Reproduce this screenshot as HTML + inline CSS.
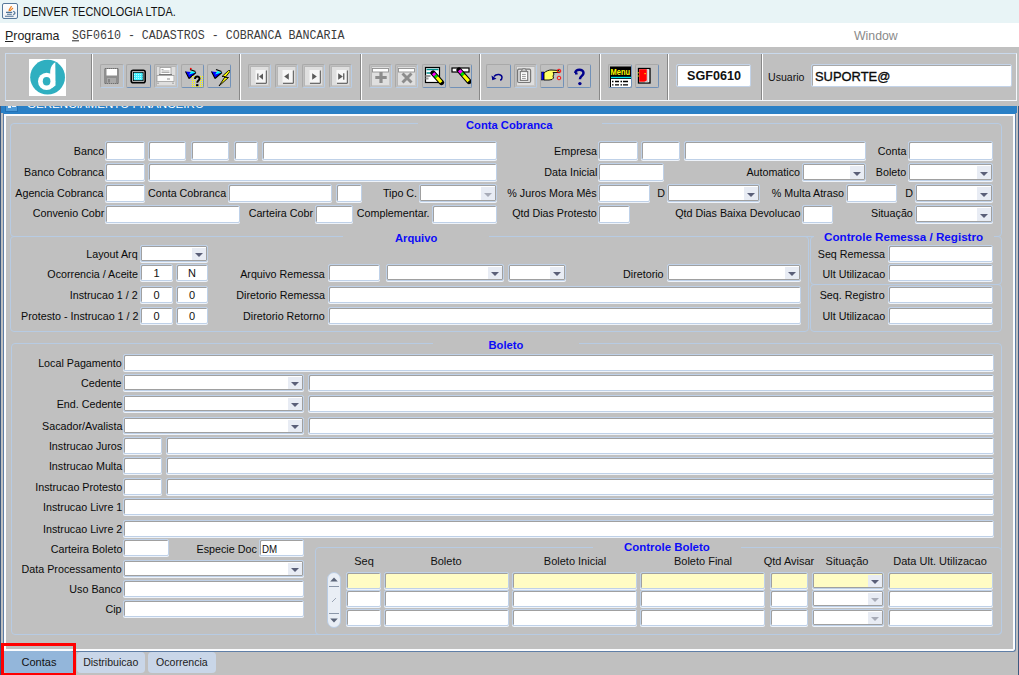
<!DOCTYPE html><html><head><meta charset="utf-8"><style>
*{margin:0;padding:0;box-sizing:border-box}
html,body{width:1019px;height:675px;overflow:hidden;background:#c0c0c0;font-family:"Liberation Sans",sans-serif;position:relative}
div{position:absolute}
.lb{white-space:nowrap;color:#0a0a0a;text-align:right;transform:scaleX(0.975);transform-origin:100% 50%}
.lc{white-space:nowrap;color:#111;text-align:center;width:200px}
.f{border:1px solid #bfd1e8;border-radius:2px;box-shadow:inset 1px 1px 0 #a0a0a0, 0 1px 0 #eef3fa;font-size:11px;color:#111;overflow:hidden;padding:0 3px}
.cb{box-shadow:inset 0 0 0 1px #a0a0a0, 0 1px 0 #eef3fa}.cb i{position:absolute;right:1px;top:2px;bottom:1px;width:14px;background:#e8ecf4}
.cb i:after{content:"";position:absolute;left:3px;top:50%;margin-top:-1px;border-left:4px solid transparent;border-right:4px solid transparent;border-top:4px solid #5a5f78}
.cb.dis i:after{border-top-color:#a8acb8}
.fr{border:1px solid #b7cbe3;border-radius:4px}
.ft{color:#0c0cf8;font-weight:bold;white-space:nowrap;height:14px;line-height:14px}
.tb{border:1px solid #a9a9a9;border-radius:2px;overflow:hidden}
.sep{width:2px;background:linear-gradient(90deg,#888 0 1px,#fff 1px 2px)}
</style></head><body>

<div style="left:0;top:0;width:1019px;height:23px;background:#e8f4f6"></div>
<div style="left:2px;top:3px;width:16px;height:16px;border:1px solid #56789b;border-radius:2px;background:linear-gradient(#fdfdfd,#eef1f4)"><svg width="14" height="14" viewBox="0 0 14 14" style="position:absolute;left:0;top:0"><path d="M6.2 7.2c-.8-2 1.8-3 2.2-5.2M7.2 7c.5-1.5 2.2-1.8 2.6-3.2" stroke="#f07c16" stroke-width="1.2" fill="none"/><path d="M3 8.4h6.2M4 10.3h4.8M2 12.3h8.6" stroke="#4d7295" stroke-width="1.1"/><path d="M10.2 7.2c2.4.8 2.4 2.6 0 3.4" stroke="#4d7295" stroke-width="1.2" fill="none"/></svg></div>
<div style="left:23px;top:4px;height:17px;line-height:17px;font-size:12.5px;color:#111;white-space:nowrap;transform:scaleX(0.875);transform-origin:0 50%">DENVER TECNOLOGIA LTDA.</div>
<div style="left:0;top:23px;width:1019px;height:24px;background:#fff"></div>
<div style="left:5px;top:28px;height:16px;line-height:16px;font-size:12.4px;color:#222;white-space:nowrap"><u>P</u>rograma</div>
<div style="left:72px;top:27.5px;height:16px;line-height:16px;font-size:11.65px;font-family:'Liberation Mono',monospace;color:#3c3c3c;white-space:nowrap;transform:scaleY(1.1);transform-origin:0 60%"><u>S</u>GF0610 - CADASTROS - COBRANCA BANCARIA</div>
<div style="left:854px;top:28px;height:16px;line-height:16px;font-size:12.3px;color:#8a8a8a;white-space:nowrap">Window</div>
<div style="left:5px;top:53px;width:1012px;height:48px;border:1px solid #f4f8fc;border-top-color:#c9d9ec;border-left-color:#c9d9ec;box-shadow:inset 0 0 0 0 #000"></div>
<div class="sep" style="left:91px;top:54px;height:46px"></div>
<div class="sep" style="left:239px;top:54px;height:46px"></div>
<div class="sep" style="left:360px;top:54px;height:46px"></div>
<div class="sep" style="left:479px;top:54px;height:46px"></div>
<div class="sep" style="left:599px;top:54px;height:46px"></div>
<div class="sep" style="left:667px;top:54px;height:46px"></div>
<div class="sep" style="left:761px;top:54px;height:46px"></div>
<div style="left:29px;top:59px;width:37px;height:37px;background:#fff"><svg width="37" height="37" viewBox="0 0 37 37" style="position:absolute;left:0;top:0"><circle cx="18.6" cy="18.2" r="17.4" fill="#2fafc0"/><circle cx="17.6" cy="22.3" r="8.6" fill="#fff"/><path d="M21.3 11 C22 7 24 4.5 26.3 3.2 L26.5 26.5 L23.8 28.6 L20.5 28 Z" fill="#fff"/><ellipse cx="17.6" cy="22.3" rx="3.8" ry="4.2" fill="#2fafc0"/></svg></div>
<div class="tb" style="left:100px;top:64px;width:24px;height:24px;background:#c0c0c0;border-right-color:#b8cde6;border-bottom-color:#b8cde6"><svg width="24" height="24" viewBox="0 0 24 24" style="position:absolute;left:-1px;top:-1px;overflow:hidden"><rect x="4" y="4" width="15" height="16" rx="1.5" fill="#8e8e8e"/><rect x="6.5" y="5" width="10.5" height="6.5" fill="#fff"/><rect x="7" y="14" width="9" height="5.5" fill="#a9a9a9"/><rect x="8" y="15" width="2" height="3.5" fill="#858585"/><path d="M5 4.5h13M5 19.5h13" stroke="#6f6f6f" stroke-dasharray="1 1"/></svg></div>
<div class="tb" style="left:126px;top:64px;width:25px;height:24px;background:#c0c0c0;border-right-color:#7191b8;border-bottom-color:#7191b8"><svg width="24" height="24" viewBox="0 0 24 24" style="position:absolute;left:-1px;top:-1px;overflow:hidden"><rect x="5.2" y="6.3" width="14" height="12.4" rx="2" fill="#c0c0c0" stroke="#000" stroke-width="1.6"/><rect x="7.3" y="8.3" width="9.8" height="8.4" fill="#40f0ff" stroke="#000" stroke-width="0.8"/><path d="M8 10.5h8.4M8 12.5h8.4M8 14.5h8.4" stroke="#d8ffff" stroke-width="0.8" stroke-dasharray="1 1"/></svg></div>
<div class="tb" style="left:154px;top:64px;width:24px;height:24px;background:#c0c0c0;border-right-color:#b8cde6;border-bottom-color:#b8cde6"><div style="left:1px;top:1px;right:1px;bottom:1px;background:#dfdfdf;box-shadow:inset 1px 1px 0 #b6b6b6,inset -1px -1px 0 #c8c8c8"></div><svg width="24" height="24" viewBox="0 0 24 24" style="position:absolute;left:-1px;top:-1px;overflow:hidden"><rect x="6" y="3.5" width="11" height="7" fill="#fff" stroke="#9a9a9a" stroke-width="0.8"/><path d="M7.5 5.5h2M7.5 7h8M7.5 8.5h8" stroke="#8a8a8a" stroke-width="0.7"/><path d="M5 10.5h13" stroke="#777" stroke-width="1"/><rect x="3" y="11.5" width="17" height="6" fill="#fafafa" stroke="#9c9c9c" stroke-width="0.8"/><path d="M4 18.5v1.5M19 18.5v1.5M13 15h3" stroke="#8a8a8a" stroke-width="1"/></svg></div>
<div class="tb" style="left:181px;top:64px;width:23px;height:24px;background:#c0c0c0;border-right-color:#7191b8;border-bottom-color:#7191b8"><svg width="24" height="24" viewBox="0 0 24 24" style="position:absolute;left:-1px;top:-1px;overflow:hidden"><path d="M4.5 7.5l3.5 7 7-6z" fill="#0000ff"/><path d="M8 10.5l7-2-4.5-1.5z" fill="#00ffff"/><path d="M4.5 7.5l3.5 7M8 14.5l7-6" stroke="#000" stroke-width="1.1" fill="none"/><path d="M9 5.5l5.5 2" stroke="#000" stroke-width="1.3"/><circle cx="9.8" cy="4.6" r="0.9" fill="#f00"/><g fill="#ffff00"><rect x="11" y="12" width="1" height="1"/><rect x="11" y="14" width="1" height="1"/><rect x="11" y="16" width="1" height="1"/><rect x="11" y="18" width="1" height="1"/><rect x="11" y="20" width="1" height="1"/><rect x="11" y="22" width="1" height="1"/><rect x="13" y="12" width="1" height="1"/><rect x="13" y="14" width="1" height="1"/><rect x="13" y="16" width="1" height="1"/><rect x="13" y="18" width="1" height="1"/><rect x="13" y="20" width="1" height="1"/><rect x="13" y="22" width="1" height="1"/><rect x="15" y="12" width="1" height="1"/><rect x="15" y="22" width="1" height="1"/><rect x="17" y="12" width="1" height="1"/><rect x="17" y="22" width="1" height="1"/><rect x="19" y="12" width="1" height="1"/><rect x="19" y="14" width="1" height="1"/><rect x="19" y="16" width="1" height="1"/><rect x="19" y="18" width="1" height="1"/><rect x="19" y="20" width="1" height="1"/><rect x="19" y="22" width="1" height="1"/><rect x="21" y="12" width="1" height="1"/><rect x="21" y="14" width="1" height="1"/><rect x="21" y="16" width="1" height="1"/><rect x="21" y="18" width="1" height="1"/><rect x="21" y="20" width="1" height="1"/><rect x="21" y="22" width="1" height="1"/></g><path d="M14 15c0-3.2 4.5-3.2 4.5-.3 0 1.8-2.3 1.8-2.3 4" fill="none" stroke="#000" stroke-width="1.9"/><rect x="15.1" y="20.2" width="2.3" height="2" fill="#000"/></svg></div>
<div class="tb" style="left:207px;top:64px;width:24px;height:24px;background:#c0c0c0;border-right-color:#7191b8;border-bottom-color:#7191b8"><svg width="24" height="24" viewBox="0 0 24 24" style="position:absolute;left:-1px;top:-1px;overflow:hidden"><path d="M4.5 7.5l3.5 7 7-6z" fill="#0000ff"/><path d="M8 10.5l7-2-4.5-1.5z" fill="#00ffff"/><path d="M4.5 7.5l3.5 7M8 14.5l7-6" stroke="#000" stroke-width="1.1" fill="none"/><path d="M9 5.5l5.5 2" stroke="#000" stroke-width="1.3"/><path d="M21.5 6.5l-6.5 6h3.2l-6.2 9.5 9.5-8.5h-3.3l5.5-7z" fill="#ffff00" stroke="#000" stroke-width="0.9" stroke-linejoin="round"/></svg></div>
<div class="tb" style="left:248px;top:64px;width:23px;height:24px;background:#c0c0c0;border-right-color:#b8cde6;border-bottom-color:#b8cde6"><div style="left:1px;top:1px;right:1px;bottom:1px;background:#dfdfdf;box-shadow:inset 1px 1px 0 #b6b6b6,inset -1px -1px 0 #c8c8c8"></div><svg width="24" height="24" viewBox="0 0 24 24" style="position:absolute;left:-1px;top:-1px;overflow:hidden"><rect x="7.5" y="6" width="10.5" height="12.5" fill="#f7f7f7"/><path d="M18.3 6.5v12.8H8" fill="none" stroke="#505050" stroke-width="1"/><rect x="9.3" y="9.5" width="1.1" height="6.2" fill="#5a5a5a"/><path d="M15 9.5l-4 3.1 4 3.1z" fill="#5a5a5a"/></svg></div>
<div class="tb" style="left:275px;top:64px;width:23px;height:24px;background:#c0c0c0;border-right-color:#b8cde6;border-bottom-color:#b8cde6"><div style="left:1px;top:1px;right:1px;bottom:1px;background:#dfdfdf;box-shadow:inset 1px 1px 0 #b6b6b6,inset -1px -1px 0 #c8c8c8"></div><svg width="24" height="24" viewBox="0 0 24 24" style="position:absolute;left:-1px;top:-1px;overflow:hidden"><rect x="7.5" y="6" width="10.5" height="12.5" fill="#f7f7f7"/><path d="M18.3 6.5v12.8H8" fill="none" stroke="#505050" stroke-width="1"/><path d="M13.8 9.3l-4.6 3.2 4.6 3.2z" fill="#5a5a5a"/></svg></div>
<div class="tb" style="left:302px;top:64px;width:23px;height:24px;background:#c0c0c0;border-right-color:#b8cde6;border-bottom-color:#b8cde6"><div style="left:1px;top:1px;right:1px;bottom:1px;background:#dfdfdf;box-shadow:inset 1px 1px 0 #b6b6b6,inset -1px -1px 0 #c8c8c8"></div><svg width="24" height="24" viewBox="0 0 24 24" style="position:absolute;left:-1px;top:-1px;overflow:hidden"><rect x="7.5" y="6" width="10.5" height="12.5" fill="#f7f7f7"/><path d="M18.3 6.5v12.8H8" fill="none" stroke="#505050" stroke-width="1"/><path d="M10.2 9.3l4.6 3.2-4.6 3.2z" fill="#5a5a5a"/></svg></div>
<div class="tb" style="left:329px;top:64px;width:23px;height:24px;background:#c0c0c0;border-right-color:#b8cde6;border-bottom-color:#b8cde6"><div style="left:1px;top:1px;right:1px;bottom:1px;background:#dfdfdf;box-shadow:inset 1px 1px 0 #b6b6b6,inset -1px -1px 0 #c8c8c8"></div><svg width="24" height="24" viewBox="0 0 24 24" style="position:absolute;left:-1px;top:-1px;overflow:hidden"><rect x="7.5" y="6" width="10.5" height="12.5" fill="#f7f7f7"/><path d="M18.3 6.5v12.8H8" fill="none" stroke="#505050" stroke-width="1"/><path d="M9.2 9.3l4.6 3.2-4.6 3.2z" fill="#5a5a5a"/><rect x="14.1" y="9.3" width="1.3" height="6.4" fill="#5a5a5a"/></svg></div>
<div class="tb" style="left:369px;top:64px;width:23px;height:24px;background:#c0c0c0;border-right-color:#b8cde6;border-bottom-color:#b8cde6"><div style="left:1px;top:1px;right:1px;bottom:1px;background:#dfdfdf;box-shadow:inset 1px 1px 0 #b6b6b6,inset -1px -1px 0 #c8c8c8"></div><svg width="24" height="24" viewBox="0 0 24 24" style="position:absolute;left:-1px;top:-1px;overflow:hidden"><rect x="3.5" y="4.5" width="16" height="3.5" fill="#fff" stroke="#909090" stroke-width="0.9"/><path d="M12 8v11M6.3 13.5h11.4" stroke="#8c8c8c" stroke-width="3.2"/></svg></div>
<div class="tb" style="left:395px;top:64px;width:23px;height:24px;background:#c0c0c0;border-right-color:#b8cde6;border-bottom-color:#b8cde6"><div style="left:1px;top:1px;right:1px;bottom:1px;background:#dfdfdf;box-shadow:inset 1px 1px 0 #b6b6b6,inset -1px -1px 0 #c8c8c8"></div><svg width="24" height="24" viewBox="0 0 24 24" style="position:absolute;left:-1px;top:-1px;overflow:hidden"><rect x="3.5" y="4.5" width="16" height="3.5" fill="#fff" stroke="#909090" stroke-width="0.9"/><path d="M7.5 9.5l9 9M16.5 9.5l-9 9" stroke="#8c8c8c" stroke-width="2.9"/></svg></div>
<div class="tb" style="left:422px;top:64px;width:24px;height:24px;background:#c0c0c0;border-right-color:#7191b8;border-bottom-color:#7191b8"><svg width="24" height="24" viewBox="0 0 24 24" style="position:absolute;left:-1px;top:-1px;overflow:hidden"><rect x="3.5" y="3.5" width="14" height="15" fill="#fff" stroke="#000" stroke-width="1.2"/><path d="M4.5 5.5h12M4.5 9h7" stroke="#008b8b" stroke-width="1.3"/><path d="M3.5 12h5M3.5 14.5h3" stroke="#9a9a9a" stroke-width="2"/><path d="M11.00 9.00L19.50 18.50" stroke="#000" stroke-width="5.2" stroke-linecap="round"/><path d="M11.17 9.19L13.12 11.38" stroke="#ff00ff" stroke-width="3.2"/><path d="M13.12 11.38L14.82 13.28" stroke="#00e000" stroke-width="3.2"/><path d="M14.82 13.28L19.24 18.21" stroke="#ffff00" stroke-width="3.2"/></svg></div>
<div class="tb" style="left:449px;top:64px;width:23px;height:24px;background:#c0c0c0;border-right-color:#7191b8;border-bottom-color:#7191b8"><svg width="24" height="24" viewBox="0 0 24 24" style="position:absolute;left:-1px;top:-1px;overflow:hidden"><rect x="3" y="4" width="17" height="4" fill="#fff" stroke="#000" stroke-width="1.2"/><path d="M10.00 6.00L20.00 17.50" stroke="#000" stroke-width="5.2" stroke-linecap="round"/><path d="M10.20 6.23L12.50 8.88" stroke="#ff00ff" stroke-width="3.2"/><path d="M12.50 8.88L14.50 11.18" stroke="#00e000" stroke-width="3.2"/><path d="M14.50 11.18L19.70 17.16" stroke="#ffff00" stroke-width="3.2"/></svg></div>
<div class="tb" style="left:486px;top:64px;width:25px;height:24px;background:#c0c0c0;border-right-color:#7191b8;border-bottom-color:#7191b8"><svg width="24" height="24" viewBox="0 0 24 24" style="position:absolute;left:-1px;top:-1px;overflow:hidden"><path d="M8 12.5c2.5-3 8-2.5 8 1 0 1.5-1 2.5-1.8 2.8" fill="none" stroke="#00008b" stroke-width="1.5"/><path d="M5.5 11.5l.8 4.8 4.2-1.6z" fill="#00008b"/></svg></div>
<div class="tb" style="left:514px;top:64px;width:23px;height:24px;background:#c0c0c0;border-right-color:#b8cde6;border-bottom-color:#b8cde6"><div style="left:1px;top:1px;right:1px;bottom:1px;background:#dfdfdf;box-shadow:inset 1px 1px 0 #b6b6b6,inset -1px -1px 0 #c8c8c8"></div><svg width="24" height="24" viewBox="0 0 24 24" style="position:absolute;left:-1px;top:-1px;overflow:hidden"><rect x="3.6" y="5.2" width="13" height="13.3" rx="1.2" fill="#e2e2e2" stroke="#777" stroke-width="1.2"/><rect x="6.3" y="7.6" width="7.4" height="8.8" fill="#fff" stroke="#777" stroke-width="1.1"/><path d="M7.5 7.2l1-2.4h3l1 2.4z" fill="#e2e2e2" stroke="#777" stroke-width="1"/><path d="M8 10.4h3.8M8 12.4h3.8M8 14.4h3.8" stroke="#8a8a8a" stroke-width="0.9"/></svg></div>
<div class="tb" style="left:540px;top:64px;width:24px;height:24px;background:#c0c0c0;border-right-color:#7191b8;border-bottom-color:#7191b8"><svg width="24" height="24" viewBox="0 0 24 24" style="position:absolute;left:-1px;top:-1px;overflow:hidden"><rect x="1.5" y="8" width="2.5" height="8" fill="#0000ff" stroke="#000" stroke-width="0.5"/><path d="M4 9c2-2 5-3 7-3l8 0.5v2h-6l1 1.5-1 2 .5 2-1.5 1.5-3 .5H4z" fill="#ffff66" stroke="#000" stroke-width="0.9"/><circle cx="19" cy="7" r="1.8" fill="none" stroke="#f00" stroke-width="0.9"/><circle cx="19" cy="14" r="1.8" fill="none" stroke="#f00" stroke-width="0.9"/></svg></div>
<div class="tb" style="left:567px;top:64px;width:24px;height:24px;background:#c0c0c0;border-right-color:#7191b8;border-bottom-color:#7191b8"><svg width="24" height="24" viewBox="0 0 24 24" style="position:absolute;left:-1px;top:-1px;overflow:hidden"><path d="M8.3 9c0-4.5 8.2-4.5 8.2 0 0 3-3.6 2.8-3.6 6.3" fill="none" stroke="#00008b" stroke-width="2.5"/><path d="M8 9.5h2.6" stroke="#00008b" stroke-width="2"/><circle cx="12.9" cy="19.6" r="1.7" fill="#00008b"/></svg></div>
<div class="tb" style="left:608px;top:64px;width:24px;height:24px;background:#c0c0c0;border-right-color:#7191b8;border-bottom-color:#7191b8"><svg width="24" height="24" viewBox="0 0 24 24" style="position:absolute;left:-1px;top:-1px;overflow:hidden"><rect x="2" y="2.5" width="21" height="21" fill="#000"/><text x="2.6" y="10.8" font-family="Liberation Sans" font-weight="bold" font-size="9.5" fill="#ffff00" textLength="19.5" lengthAdjust="spacingAndGlyphs">Menu</text><rect x="3" y="12.8" width="20" height="1.4" fill="#00e8f0"/><rect x="3" y="15" width="20" height="8" fill="#fff"/><path d="M4 17.5h1.5M7 17.5h4M12.5 17.5h1.5M15 17.5h5M4 20.8h1.5M7 20.8h4M12.5 20.8h1.5M15 20.8h5" stroke="#000" stroke-width="1.3"/></svg></div>
<div class="tb" style="left:635px;top:64px;width:24px;height:24px;background:#c0c0c0;border-right-color:#7191b8;border-bottom-color:#7191b8"><svg width="24" height="24" viewBox="0 0 24 24" style="position:absolute;left:-1px;top:-1px;overflow:hidden"><rect x="3.5" y="4.5" width="11.5" height="14.5" fill="#fff" stroke="#000" stroke-width="1.3"/><path d="M4.2 5.2h7.6v11.3l-2 1.2H4.2z" fill="#ff0000"/><path d="M12.8 6v11.8H9.8" fill="none" stroke="#b8b8b8" stroke-width="1"/><rect x="9.5" y="9" width="1.2" height="1.2" fill="#ff0"/><rect x="2.6" y="8.3" width="1.2" height="1" fill="#ff0"/><rect x="2.6" y="11.5" width="1.2" height="1" fill="#ff0"/></svg></div>
<div style="left:676px;top:64px;width:75px;height:23px;background:#fff;border:1px solid #c3d3e8;box-shadow:inset 1px 1px 0 #b0b0b0;border-radius:2px;font-weight:bold;font-size:12.6px;line-height:23px;text-align:center;color:#111;padding-left:1px">SGF0610</div>
<div style="left:768px;top:69px;height:16px;line-height:16px;font-size:10.6px;color:#111;white-space:nowrap">Usuario</div>
<div style="left:811px;top:64px;width:201px;height:23px;background:#fff;border:1px solid #c3d3e8;box-shadow:inset 1px 1px 0 #a8a8a8;border-radius:2px;font-size:13.6px;line-height:23px;padding-left:3px;color:#0a0a0a;-webkit-text-stroke:0.35px #0a0a0a"><span style="display:inline-block;transform:scaleX(0.95);transform-origin:0 50%">SUPORTE@</span></div>
<div style="left:1px;top:106px;width:1016px;height:7px;background:#2a80c6;overflow:hidden"><div style="left:26px;top:-9px;height:14px;line-height:14px;font-size:11.6px;color:#fff;white-space:nowrap">GERENCIAMENTO FINANCEIRO</div><div style="left:4px;top:-4px;width:13px;height:10px;border:1px solid #2270b4;background:#4d9ad8"><div style="left:2px;top:2px;width:3px;height:3px;background:#e8f2fb"></div><div style="left:6px;top:2px;width:4px;height:2px;background:#e8f2fb"></div></div></div>
<div style="left:0;top:106px;width:1px;height:569px;background:#3d5a80"></div>
<div style="left:1018px;top:106px;width:1px;height:569px;background:#3d5a80"></div>
<div style="left:3px;top:113px;width:1013px;height:539px;border:1px solid #5f7ea6;border-top-color:#2a80c6;border-radius:0 0 3px 0;box-shadow:inset 0 0 0 2px #fbfcfe"></div>
<div class="fr" style="left:10px;top:123px;width:992px;height:114px"></div>
<div style="left:418px;top:122px;width:184px;height:3px;background:#c0c0c0"></div>
<div class="ft" style="left:466px;top:117.5px;font-size:11.2px">Conta Cobranca</div>
<div class="fr" style="left:10px;top:236px;width:799px;height:96px"></div>
<div style="left:343px;top:235px;width:146px;height:3px;background:#c0c0c0"></div>
<div class="ft" style="left:395px;top:231px;font-size:11.2px">Arquivo</div>
<div class="fr" style="left:810px;top:236px;width:192px;height:49px"></div>
<div style="left:814px;top:235px;width:180px;height:3px;background:#c0c0c0"></div>
<div class="ft" style="left:824px;top:230px;font-size:11.65px">Controle Remessa / Registro</div>
<div class="fr" style="left:810px;top:284px;width:192px;height:48px"></div>
<div class="fr" style="left:11px;top:343px;width:991px;height:292px"></div>
<div style="left:433px;top:342px;width:146px;height:3px;background:#c0c0c0"></div>
<div class="ft" style="left:488.5px;top:338px;font-size:11.2px">Boleto</div>
<div class="fr" style="left:315px;top:547px;width:687px;height:88px"></div>
<div style="left:593px;top:546px;width:148px;height:3px;background:#c0c0c0"></div>
<div class="ft" style="left:624px;top:540px;font-size:11.45px">Controle Boleto</div>
<div class="lb" style="right:915px;top:141.9px;height:19px;line-height:19px;font-size:11px">Banco</div>
<div class="f" style="left:105px;top:141px;width:40px;height:19px;line-height:18px;background:#fff;text-align:center"></div>
<div class="f" style="left:148px;top:141px;width:38px;height:19px;line-height:18px;background:#fff;text-align:center"></div>
<div class="f" style="left:191px;top:141px;width:38px;height:19px;line-height:18px;background:#fff;text-align:center"></div>
<div class="f" style="left:234px;top:141px;width:24px;height:19px;line-height:18px;background:#fff;text-align:center"></div>
<div class="f" style="left:262px;top:141px;width:235px;height:19px;line-height:18px;background:#fff;text-align:center"></div>
<div class="lb" style="right:422px;top:141.9px;height:19px;line-height:19px;font-size:11px">Empresa</div>
<div class="f" style="left:598px;top:141px;width:40px;height:19px;line-height:18px;background:#fff;text-align:center"></div>
<div class="f" style="left:641px;top:141px;width:39px;height:19px;line-height:18px;background:#fff;text-align:center"></div>
<div class="f" style="left:684px;top:141px;width:182px;height:19px;line-height:18px;background:#fff;text-align:center"></div>
<div class="lb" style="right:113px;top:141.9px;height:19px;line-height:19px;font-size:11px">Conta</div>
<div class="f" style="left:908px;top:141px;width:85px;height:19px;line-height:18px;background:#fff;text-align:center"></div>
<div class="lb" style="right:915px;top:162.6px;height:19px;line-height:19px;font-size:11px">Banco Cobranca</div>
<div class="f" style="left:105px;top:163px;width:40px;height:18px;line-height:17px;background:#fff;text-align:center"></div>
<div class="f" style="left:148px;top:163px;width:349px;height:18px;line-height:17px;background:#fff;text-align:center"></div>
<div class="lb" style="right:422px;top:162.6px;height:19px;line-height:19px;font-size:11px">Data Inicial</div>
<div class="f" style="left:598px;top:163px;width:66px;height:18px;line-height:17px;background:#fff;text-align:center"></div>
<div class="lb" style="right:218.5px;top:162.6px;height:19px;line-height:19px;font-size:11px">Automatico</div>
<div class="f cb" style="left:802px;top:163px;width:64px;height:18px;background:#fff"><i></i></div>
<div class="lb" style="right:113px;top:162.6px;height:19px;line-height:19px;font-size:11px">Boleto</div>
<div class="f cb" style="left:908px;top:163px;width:85px;height:18px;background:#fff"><i></i></div>
<div class="lb" style="right:915px;top:184.2px;height:19px;line-height:19px;font-size:11px">Agencia Cobranca</div>
<div class="f" style="left:105px;top:184px;width:40px;height:18px;line-height:17px;background:#fff;text-align:center"></div>
<div class="lb" style="right:793px;top:184.2px;height:19px;line-height:19px;font-size:11px">Conta Cobranca</div>
<div class="f" style="left:228px;top:184px;width:104px;height:18px;line-height:17px;background:#fff;text-align:center"></div>
<div class="f" style="left:336px;top:184px;width:26px;height:18px;line-height:17px;background:#fff;text-align:center"></div>
<div class="lb" style="right:602px;top:184.2px;height:19px;line-height:19px;font-size:11px">Tipo C.</div>
<div class="f cb dis" style="left:419px;top:184px;width:78px;height:18px;background:#fff"><i></i></div>
<div class="lb" style="right:422px;top:184.2px;height:19px;line-height:19px;font-size:11px">% Juros Mora Mês</div>
<div class="f" style="left:598px;top:184px;width:52px;height:18px;line-height:17px;background:#fff;text-align:center"></div>
<div class="lb" style="right:354px;top:184.2px;height:19px;line-height:19px;font-size:11px">D</div>
<div class="f cb" style="left:667px;top:184px;width:93px;height:18px;background:#fff"><i></i></div>
<div class="lb" style="right:175px;top:184.2px;height:19px;line-height:19px;font-size:11px">% Multa Atraso</div>
<div class="f" style="left:846px;top:184px;width:51px;height:18px;line-height:17px;background:#fff;text-align:center"></div>
<div class="lb" style="right:106px;top:184.2px;height:19px;line-height:19px;font-size:11px">D</div>
<div class="f cb" style="left:915px;top:184px;width:78px;height:18px;background:#fff"><i></i></div>
<div class="lb" style="right:915px;top:204.2px;height:19px;line-height:19px;font-size:11px">Convenio Cobr</div>
<div class="f" style="left:105px;top:205px;width:135px;height:18px;line-height:17px;background:#fff;text-align:center"></div>
<div class="lb" style="right:706px;top:204.2px;height:19px;line-height:19px;font-size:11px">Carteira Cobr</div>
<div class="f" style="left:314.5px;top:205px;width:38.5px;height:18px;line-height:17px;background:#fff;text-align:center"></div>
<div class="lb" style="right:589px;top:204.2px;height:19px;line-height:19px;font-size:11px">Complementar.</div>
<div class="f" style="left:431.5px;top:205px;width:65.5px;height:18px;line-height:17px;background:#fff;text-align:center"></div>
<div class="lb" style="right:422px;top:204.2px;height:19px;line-height:19px;font-size:11px">Qtd Dias Protesto</div>
<div class="f" style="left:598px;top:205px;width:32px;height:18px;line-height:17px;background:#fff;text-align:center"></div>
<div class="lb" style="right:219px;top:204.2px;height:19px;line-height:19px;font-size:11px">Qtd Dias Baixa Devolucao</div>
<div class="f" style="left:802px;top:205px;width:31px;height:18px;line-height:17px;background:#fff;text-align:center"></div>
<div class="lb" style="right:106px;top:204.2px;height:19px;line-height:19px;font-size:11px">Situação</div>
<div class="f cb" style="left:915px;top:205px;width:78px;height:18px;background:#fff"><i></i></div>
<div class="lb" style="right:881px;top:246px;height:17px;line-height:17px;font-size:11px">Layout Arq</div>
<div class="f cb" style="left:140px;top:245px;width:68px;height:17px;background:#fff"><i></i></div>
<div class="lb" style="right:881px;top:266px;height:17px;line-height:17px;font-size:11px">Ocorrencia / Aceite</div>
<div class="f" style="left:140px;top:264px;width:33px;height:17px;line-height:16px;background:#fff;text-align:center">1</div>
<div class="f" style="left:176px;top:264px;width:32px;height:17px;line-height:16px;background:#fff;text-align:center">N</div>
<div class="lb" style="right:881px;top:287px;height:17px;line-height:17px;font-size:11px">Instrucao 1 / 2</div>
<div class="f" style="left:140px;top:286px;width:33px;height:17px;line-height:16px;background:#fff;text-align:center">0</div>
<div class="f" style="left:176px;top:286px;width:32px;height:17px;line-height:16px;background:#fff;text-align:center">0</div>
<div class="lb" style="right:881px;top:308px;height:17px;line-height:17px;font-size:11px">Protesto - Instrucao 1 / 2</div>
<div class="f" style="left:140px;top:307px;width:33px;height:17px;line-height:16px;background:#fff;text-align:center">0</div>
<div class="f" style="left:176px;top:307px;width:32px;height:17px;line-height:16px;background:#fff;text-align:center">0</div>
<div class="lb" style="right:694px;top:266px;height:17px;line-height:17px;font-size:11px">Arquivo Remessa</div>
<div class="f" style="left:328px;top:264px;width:52px;height:17px;line-height:16px;background:#fff;text-align:center"></div>
<div class="f cb" style="left:386px;top:264px;width:118px;height:17px;background:#fff"><i></i></div>
<div class="f cb" style="left:508px;top:264px;width:58px;height:17px;background:#fff"><i></i></div>
<div class="lb" style="right:355px;top:266px;height:17px;line-height:17px;font-size:11px">Diretorio</div>
<div class="f cb" style="left:667px;top:264px;width:134px;height:17px;background:#fff"><i></i></div>
<div class="lb" style="right:694px;top:287px;height:17px;line-height:17px;font-size:11px">Diretorio Remessa</div>
<div class="f" style="left:328px;top:286px;width:473px;height:17px;line-height:16px;background:#fff;text-align:center"></div>
<div class="lb" style="right:694px;top:308px;height:17px;line-height:17px;font-size:11px">Diretorio Retorno</div>
<div class="f" style="left:328px;top:307px;width:473px;height:17px;line-height:16px;background:#fff;text-align:center"></div>
<div class="lb" style="right:134px;top:246px;height:17px;line-height:17px;font-size:11px">Seq Remessa</div>
<div class="f" style="left:888px;top:245px;width:105px;height:17px;line-height:16px;background:#fff;text-align:center"></div>
<div class="lb" style="right:134px;top:266px;height:17px;line-height:17px;font-size:11px">Ult Utilizacao</div>
<div class="f" style="left:888px;top:264px;width:105px;height:17px;line-height:16px;background:#fff;text-align:center"></div>
<div class="lb" style="right:134px;top:287px;height:17px;line-height:17px;font-size:11px">Seq. Registro</div>
<div class="f" style="left:888px;top:286px;width:105px;height:17px;line-height:16px;background:#fff;text-align:center"></div>
<div class="lb" style="right:134px;top:308px;height:17px;line-height:17px;font-size:11px">Ult Utilizacao</div>
<div class="f" style="left:888px;top:307px;width:105px;height:17px;line-height:16px;background:#fff;text-align:center"></div>
<div class="lb" style="right:897px;top:354.5px;height:17px;line-height:17px;font-size:11px">Local Pagamento</div>
<div class="f" style="left:123px;top:354px;width:871px;height:17px;line-height:16px;background:#fff;text-align:center"></div>
<div class="lb" style="right:897px;top:374.5px;height:17px;line-height:17px;font-size:11px">Cedente</div>
<div class="f cb" style="left:123px;top:374px;width:181px;height:17px;background:#fff"><i></i></div>
<div class="f" style="left:308px;top:374px;width:686px;height:17px;line-height:16px;background:#fff;text-align:center"></div>
<div class="lb" style="right:897px;top:395.5px;height:17px;line-height:17px;font-size:11px">End. Cedente</div>
<div class="f cb" style="left:123px;top:395px;width:181px;height:17px;background:#fff"><i></i></div>
<div class="f" style="left:308px;top:395px;width:686px;height:17px;line-height:16px;background:#fff;text-align:center"></div>
<div class="lb" style="right:897px;top:417.5px;height:17px;line-height:17px;font-size:11px">Sacador/Avalista</div>
<div class="f cb" style="left:123px;top:417px;width:181px;height:17px;background:#fff"><i></i></div>
<div class="f" style="left:308px;top:417px;width:686px;height:17px;line-height:16px;background:#fff;text-align:center"></div>
<div class="lb" style="right:897px;top:437.5px;height:17px;line-height:17px;font-size:11px">Instrucao Juros</div>
<div class="f" style="left:123px;top:437px;width:39px;height:17px;line-height:16px;background:#fff;text-align:center"></div>
<div class="f" style="left:165.5px;top:437px;width:828.5px;height:17px;line-height:16px;background:#fff;text-align:center"></div>
<div class="lb" style="right:897px;top:457.5px;height:17px;line-height:17px;font-size:11px">Instrucao Multa</div>
<div class="f" style="left:123px;top:457px;width:39px;height:17px;line-height:16px;background:#fff;text-align:center"></div>
<div class="f" style="left:165.5px;top:457px;width:828.5px;height:17px;line-height:16px;background:#fff;text-align:center"></div>
<div class="lb" style="right:897px;top:478.5px;height:17px;line-height:17px;font-size:11px">Instrucao Protesto</div>
<div class="f" style="left:123px;top:478px;width:39px;height:17px;line-height:16px;background:#fff;text-align:center"></div>
<div class="f" style="left:165.5px;top:478px;width:828.5px;height:17px;line-height:16px;background:#fff;text-align:center"></div>
<div class="lb" style="right:897px;top:498.5px;height:17px;line-height:17px;font-size:11px">Instrucao Livre 1</div>
<div class="f" style="left:123px;top:498px;width:871px;height:17px;line-height:16px;background:#fff;text-align:center"></div>
<div class="lb" style="right:897px;top:520.5px;height:17px;line-height:17px;font-size:11px">Instrucao Livre 2</div>
<div class="f" style="left:123px;top:520px;width:871px;height:17px;line-height:16px;background:#fff;text-align:center"></div>
<div class="lb" style="right:897px;top:540.5px;height:17px;line-height:17px;font-size:11px">Carteira Boleto</div>
<div class="f" style="left:123px;top:539px;width:46px;height:17px;line-height:16px;background:#fff;text-align:center"></div>
<div class="lb" style="right:762px;top:540.5px;height:17px;line-height:17px;font-size:11px">Especie Doc</div>
<div class="f" style="left:259px;top:539px;width:45px;height:17px;line-height:18px;background:#fff;padding-left:2px;font-size:10.6px"><span style="display:inline-block;transform:scaleX(0.92);transform-origin:0 50%">DM</span></div>
<div class="lb" style="right:897px;top:560.5px;height:17px;line-height:17px;font-size:11px">Data Processamento</div>
<div class="f cb" style="left:123px;top:560px;width:181px;height:17px;background:#fff"><i></i></div>
<div class="lb" style="right:897px;top:580.5px;height:17px;line-height:17px;font-size:11px">Uso Banco</div>
<div class="f" style="left:123px;top:580px;width:181px;height:17px;line-height:16px;background:#fff;text-align:center"></div>
<div class="lb" style="right:897px;top:600.5px;height:17px;line-height:17px;font-size:11px">Cip</div>
<div class="f" style="left:123px;top:600px;width:181px;height:17px;line-height:16px;background:#fff;text-align:center"></div>
<div class="lc" style="left:264px;top:554px;height:14px;line-height:14px;font-size:11px">Seq</div>
<div class="lc" style="left:346px;top:554px;height:14px;line-height:14px;font-size:11px">Boleto</div>
<div class="lc" style="left:475px;top:554px;height:14px;line-height:14px;font-size:11px">Boleto Inicial</div>
<div class="lc" style="left:603px;top:554px;height:14px;line-height:14px;font-size:11px">Boleto Final</div>
<div class="lc" style="left:689px;top:554px;height:14px;line-height:14px;font-size:11px">Qtd Avisar</div>
<div class="lc" style="left:747px;top:554px;height:14px;line-height:14px;font-size:11px">Situação</div>
<div class="lc" style="left:840px;top:554px;height:14px;line-height:14px;font-size:11px">Data Ult. Utilizacao</div>
<div class="f" style="left:346px;top:572px;width:35px;height:17px;line-height:16px;background:#fffcc4;text-align:center"></div>
<div class="f" style="left:384px;top:572px;width:125px;height:17px;line-height:16px;background:#fffcc4;text-align:center"></div>
<div class="f" style="left:512px;top:572px;width:125px;height:17px;line-height:16px;background:#fffcc4;text-align:center"></div>
<div class="f" style="left:640px;top:572px;width:125px;height:17px;line-height:16px;background:#fffcc4;text-align:center"></div>
<div class="f" style="left:770px;top:572px;width:38px;height:17px;line-height:16px;background:#fffcc4;text-align:center"></div>
<div class="f cb" style="left:812px;top:572px;width:72px;height:17px;background:#fffcc4"><i></i></div>
<div class="f" style="left:888px;top:572px;width:105px;height:17px;line-height:16px;background:#fffcc4;text-align:center"></div>
<div class="f" style="left:346px;top:590px;width:35px;height:17px;line-height:16px;background:#fff;text-align:center"></div>
<div class="f" style="left:384px;top:590px;width:125px;height:17px;line-height:16px;background:#fff;text-align:center"></div>
<div class="f" style="left:512px;top:590px;width:125px;height:17px;line-height:16px;background:#fff;text-align:center"></div>
<div class="f" style="left:640px;top:590px;width:125px;height:17px;line-height:16px;background:#fff;text-align:center"></div>
<div class="f" style="left:770px;top:590px;width:38px;height:17px;line-height:16px;background:#fff;text-align:center"></div>
<div class="f cb dis" style="left:812px;top:590px;width:72px;height:17px;background:#fff"><i></i></div>
<div class="f" style="left:888px;top:590px;width:105px;height:17px;line-height:16px;background:#fff;text-align:center"></div>
<div class="f" style="left:346px;top:609px;width:35px;height:17px;line-height:16px;background:#fff;text-align:center"></div>
<div class="f" style="left:384px;top:609px;width:125px;height:17px;line-height:16px;background:#fff;text-align:center"></div>
<div class="f" style="left:512px;top:609px;width:125px;height:17px;line-height:16px;background:#fff;text-align:center"></div>
<div class="f" style="left:640px;top:609px;width:125px;height:17px;line-height:16px;background:#fff;text-align:center"></div>
<div class="f" style="left:770px;top:609px;width:38px;height:17px;line-height:16px;background:#fff;text-align:center"></div>
<div class="f cb dis" style="left:812px;top:609px;width:72px;height:17px;background:#fff"><i></i></div>
<div class="f" style="left:888px;top:609px;width:105px;height:17px;line-height:16px;background:#fff;text-align:center"></div>
<div style="left:327px;top:572px;width:14px;height:56px;border:1px solid #b9cce4;border-radius:7px;background:#e9eef5"><div style="left:1px;top:13px;width:10px;height:1px;background:#8a96a8"></div><div style="left:1px;top:40px;width:10px;height:1px;background:#8a96a8"></div></div>
<svg style="position:absolute;left:327px;top:572px" width="14" height="56"><path d="M3.2 9.5 L7 5.5 L10.8 9.5Z" fill="#5b6478"/><path d="M3.2 46.5 L7 50.5 L10.8 46.5Z" fill="#5b6478"/><path d="M5 30 L9 26" stroke="#9aa4b4" stroke-width="1"/></svg>
<div style="left:77px;top:652px;width:68px;height:21px;background:#c9d6e8;border-radius:4px;font-size:11px;line-height:21px;text-align:center;color:#222"><span style="display:inline-block;transform:scaleX(0.96)">Distribuicao</span></div>
<div style="left:148px;top:652px;width:68px;height:21px;background:#c9d6e8;border-radius:4px;font-size:11px;line-height:21px;text-align:center;color:#222"><span style="display:inline-block;transform:scaleX(0.96)">Ocorrencia</span></div>
<div style="left:4px;top:651px;width:70px;height:22px;background:#93b6da;border-radius:0 4px 4px 4px;font-size:11px;line-height:23px;text-align:center;color:#111">Contas</div>
<div style="left:1px;top:643px;width:75px;height:33px;border:3px solid #ff0000"></div>
</body></html>
